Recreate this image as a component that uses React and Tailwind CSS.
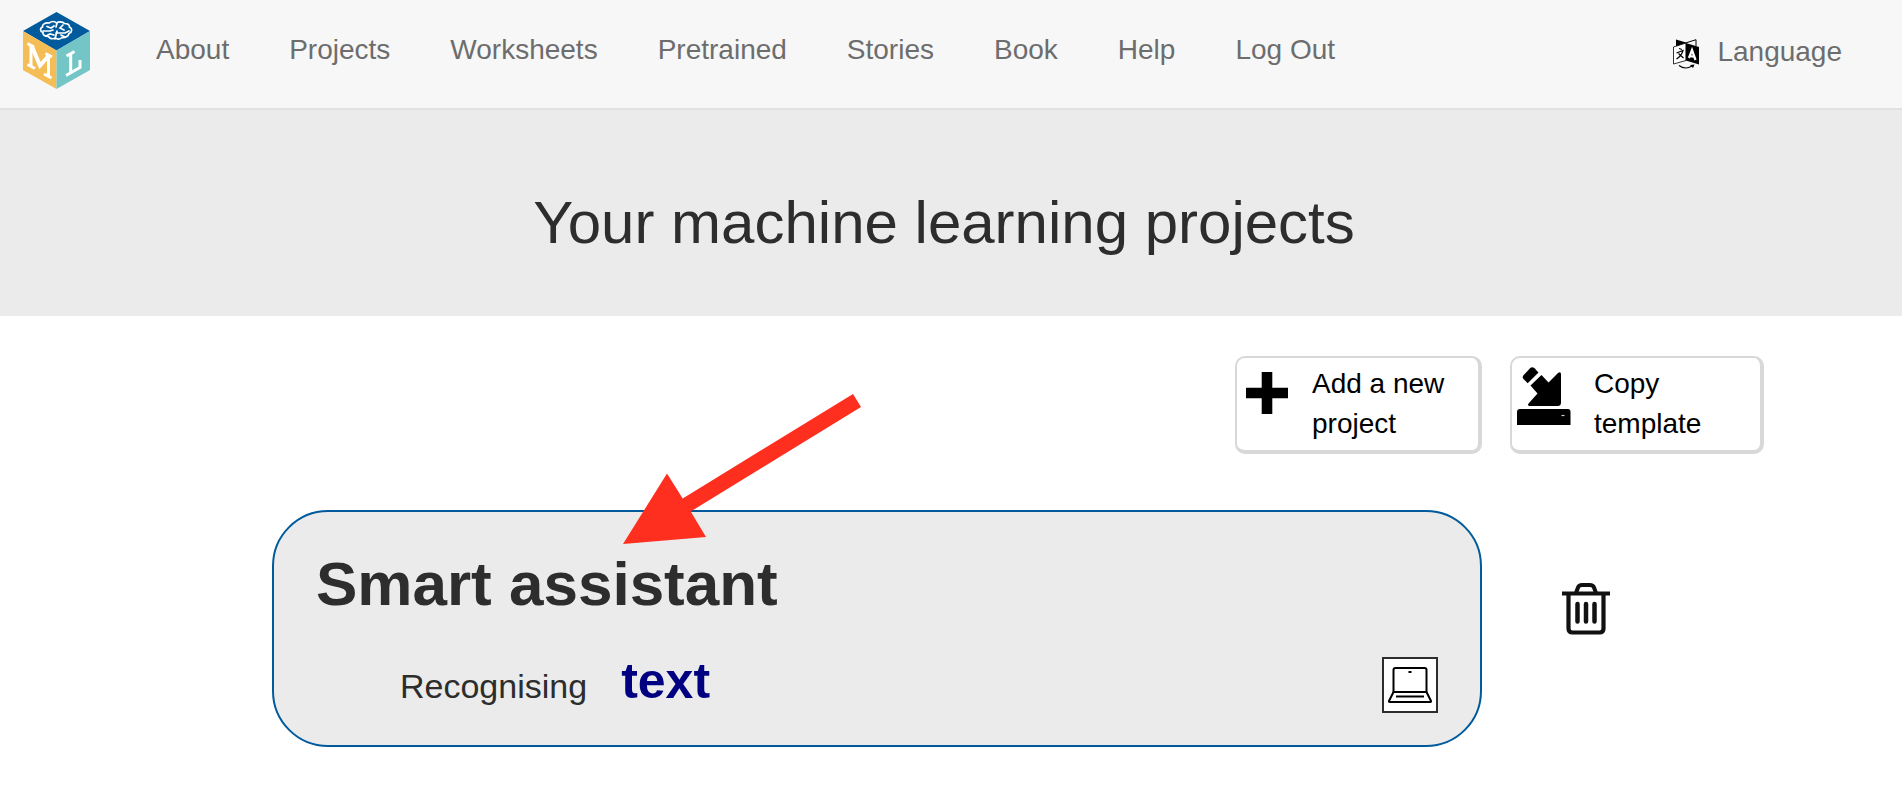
const NAV = ["About", "Projects", "Worksheets", "Pretrained", "Stories", "Book", "Help", "Log Out"];

function Logo() {
  return (
    <svg viewBox="0 0 67 77" className="h-[77px] w-[67px]" aria-hidden="true">
      <polygon points="33.500,0 67,19 33.500,38.500 0,19" fill="#005a9c" />
      <polygon points="0,19 33.500,38.500 33.500,77 0,58" fill="#f5bd55" />
      <polygon points="67,19 33.500,38.500 33.500,77 67,58" fill="#73c5c6" />
      <g fill="none" stroke="#fff" strokeWidth="1.700" strokeLinecap="round">
        <path d="M26 11c3-2 6-1.500 7.500 0 2-1.500 6-1.500 8 .5 3 0 5 1.500 5 3.500 3 1.500 3 5-.5 6.500-.5 3-4 4.500-7 4-2 2-5 2-6.500.500-3 1.500-6 .500-7-1.500-4 0-6-2-5.500-4-3.500-1.500-3-4.500-.500-5.500C19 12.500 22 10.500 26 11z" />
        <path d="M34 11l-1 4M34 19l-2 8M24 14.500l4 1.500 3-2M20 19h7l3-1M23 24l4-2 4 1M40 13l-3 3 4 2M46 19l-4 2h-9M42 25l-4-2" />
      </g>
      <g fill="none" stroke="#fff">
        <path d="M4.500 31.500l6.500 3.500M4.500 52.500l7.500 4M21 62l7.500 4M22.500 41.500l6.500 3.500" strokeWidth="3" />
        <path d="M8 33v21M25.500 44v20" strokeWidth="3" />
        <path d="M8.500 33.500l8.500 20L25.500 44" strokeWidth="4" />
        <path d="M43.500 44l8-4.500M47.700 41.500v20.500M43 63.500l14-8v-7.500" strokeWidth="3" />
      </g>
    </svg>
  );
}

function LanguageIcon() {
  return (
    <svg viewBox="0 0 26 30" className="mt-[3px] h-[30px] w-[26px]" aria-hidden="true">
      <path d="M3 .5l10 3v5L3 7z" fill="#000" />
      <path d="M12.500 4L23 .7V7" fill="none" stroke="#000" strokeWidth="1" />
      <path d="M.5 8L13 4v17.500L.5 25z" fill="#fff" stroke="#000" strokeWidth=".8" />
      <path d="M12.800 4L26 8v17.500l-13.200-4z" fill="#000" />
      <path d="M6 9.500l3 1M3.500 14l6.500-2.500c-1 4-3.500 6.500-6.500 8.500M5.500 14.500l5 4.500" fill="none" stroke="#000" strokeWidth="1.200" />
      <path d="M16 19l3-8 3.500 10M17 17l4.500 1" fill="none" stroke="#fff" strokeWidth="2.300" />
      <path d="M6 26.500c4 3 9 3 13 .5" fill="none" stroke="#000" strokeWidth="1.100" />
      <path d="M17 26l4.500-.5-1.500 3.500z" fill="#000" />
    </svg>
  );
}

function PlusIcon() {
  return (
    <svg viewBox="0 0 42 42" className="h-[42px] w-[42px] shrink-0" aria-hidden="true">
      <path d="M15.700 0h10.600v15.700H42v10.600H26.300V42H15.700V26.300H0V15.700h15.700z" />
    </svg>
  );
}

function CopyIcon() {
  return (
    <svg viewBox="0 0 54 58" className="h-[58px] w-[54px] shrink-0" aria-hidden="true">
      <path d="M13.500.8q2-1.400 4 .4l4 4.300L10.700 16.300 6.500 12q-1.500-2 .2-4z" />
      <path d="M13.500 18.500L24.500 8l7 7.500L41 6q3-2 3 1.500V35.500q0 3.500-3.500 3.500H13q-3.500-.5-1-3L20.500 26.500z" />
      <path d="M3 42h48q2.500 0 2.500 3v13H0V45q0-3 3-3z" />
      <path d="M44.500 48.500h3" stroke="#ccc" strokeWidth="1.200" />
    </svg>
  );
}

function TrashIcon() {
  return (
    <svg viewBox="0 0 48 54" className="h-[54px] w-12" fill="none" stroke="#111" aria-hidden="true">
      <path d="M0 11.500h48" strokeWidth="4" />
      <path d="M14 11l2-5.500q1-2.500 4-2.500h8q3 0 4 2.500l2 5.500" strokeWidth="4" />
      <path d="M6.500 12v34.500q0 4 4 4h27q4 0 4-4V12" strokeWidth="4.200" />
      <path d="M15.500 22v17.500M24 22v17.500M32.500 22v17.500" strokeWidth="4.500" strokeLinecap="round" />
    </svg>
  );
}

function LaptopIcon() {
  return (
    <svg viewBox="0 0 44 36" className="h-9 w-11" fill="none" stroke="#000" strokeWidth="2" strokeLinejoin="round" aria-hidden="true">
      <path d="M5.500 25V3q0-2 2-2h29q2 0 2 2v22z" />
      <path d="M5.500 25L1 34q-.3 1 .7 1h40.600q1 0 .7-1l-4.500-9" />
      <path d="M8 29.500h28" />
      <path d="M20.500 5h3" />
    </svg>
  );
}

function Arrow() {
  return (
    <svg viewBox="0 0 238 150" className="pointer-events-none absolute -top-[118px] left-[349px] z-10 h-[150px] w-[238px]" aria-hidden="true">
      <polygon points="0,150 44,79.500 59.700,104.500 230,0 238,13 67.700,117.500 83,143" fill="#ff2f1f" />
    </svg>
  );
}

const BUTTON =
  "flex h-[98px] items-start rounded-[10px] border-t-2 border-r-4 border-b-4 border-l-2 border-[#d8d8d8] bg-white text-left text-[28px] leading-10 text-black";

export default function App() {
  return (
    <div className="min-h-screen bg-white font-['Liberation_Sans',Arial,sans-serif] text-[#2d2d2d]">
      <nav className="flex h-[110px] items-start border-b-2 border-[#e1e1e1] bg-[#f7f7f7] pr-[60px] pl-[23px] text-[28px] leading-8 text-[#6d6d6d]">
        <a href="#home" aria-label="Home" className="mt-3">
          <Logo />
        </a>
        <ul className="mt-[34px] ml-[66px] flex gap-[60px]">
          {NAV.map((item) => (
            <li key={item}>
              <a href={"#" + item.toLowerCase().replace(" ", "-")}>{item}</a>
            </li>
          ))}
        </ul>
        <button type="button" className="mt-9 ml-auto flex items-start gap-[18px]">
          <LanguageIcon />
          Language
        </button>
      </nav>

      <header className="flex h-[206px] justify-center bg-[#ebebeb] pt-[79px] pr-[14px]">
        <h1 className="text-[60px] leading-[68px]">Your machine learning projects</h1>
      </header>

      <main className="pt-10">
        <div className="flex justify-end gap-7 pr-[138px]">
          <button type="button" className={BUTTON + " w-[247px] gap-6 pt-[6px] pl-[9px]"}>
            <span className="mt-2">
              <PlusIcon />
            </span>
            <span>Add a new project</span>
          </button>
          <button type="button" className={BUTTON + " w-[254px] gap-[23px] pt-[6px] pr-10 pl-[5px]"}>
            <span className="mt-[3px]">
              <CopyIcon />
            </span>
            <span>Copy template</span>
          </button>
        </div>

        <div className="mt-14 flex items-start pr-[292px] pl-[272px]">
          <section className="relative h-[237px] flex-1 rounded-[56px] border-2 border-[#005a9c] bg-[#ebebeb] px-[42px]">
            <Arrow />
            <h2 className="pt-9 text-[62px] leading-[72px] font-bold">Smart assistant</h2>
            <div className="mt-[37px] flex items-start justify-between pl-[84px]">
              <p className="flex items-baseline gap-[34px] text-[34px] leading-[48px]">
                Recognising
                <strong className="text-[50px] text-[#000080]">text</strong>
              </p>
              <span className="flex size-14 items-center justify-center border-2 border-[#2d2d2d] bg-white">
                <LaptopIcon />
              </span>
            </div>
          </section>
          <button type="button" aria-label="Delete project" className="mt-[72px] ml-20">
            <TrashIcon />
          </button>
        </div>
      </main>
    </div>
  );
}
